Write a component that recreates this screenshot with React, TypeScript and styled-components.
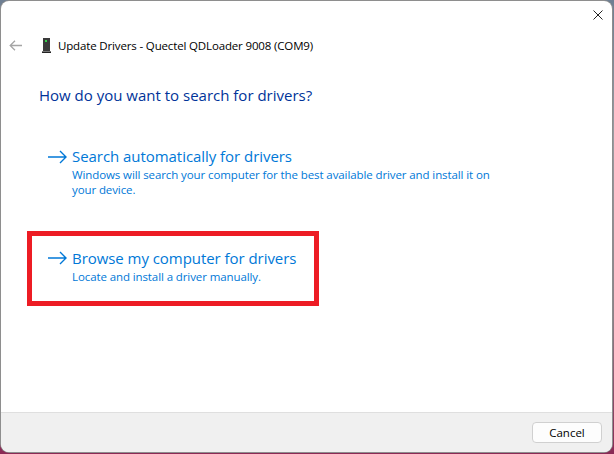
import styled, { createGlobalStyle } from 'styled-components';

const Global = createGlobalStyle`
  html, body { margin: 0; padding: 0; }
  body { width: 614px; height: 454px; overflow: hidden; background: #8d8f94; }
  #root { width: 614px; height: 454px; }
`;

const Desktop = styled.div`
  width: 614px;
  height: 454px;
  box-sizing: border-box;
  padding: 1px 2px 2px 1px;
  background: linear-gradient(#6f7f93, #9a9ba0 30%, #8c7f86 70%, #8a2a55);
  font-family: 'Open Sans', 'Noto Sans', 'Liberation Sans', sans-serif;
`;

const Window = styled.div`
  width: 100%;
  height: 100%;
  box-sizing: border-box;
  display: flex;
  flex-direction: column;
  background: #fff;
  border-radius: 8px;
  overflow: hidden;
  box-shadow: 0 0 0 1px #8e8e8e;
`;

const TitleArea = styled.div`
  height: 28px;
  box-sizing: border-box;
  display: flex;
  justify-content: flex-end;
  align-items: flex-start;
  padding: 9px 9px 0 0;
  flex-shrink: 0;
`;

const Header = styled.div`
  display: flex;
  align-items: center;
  height: 22px;
  margin-top: 5px;
  padding-left: 8px;
`;

const DeviceIcon = styled.svg`
  margin-left: 20px;
`;

const HeaderTitle = styled.span`
  font-size: 11.5px;
  letter-spacing: -0.15px;
  color: #000;
  margin-left: 7px;
`;

const Heading = styled.h1`
  margin: 28px 0 0 38px;
  font-size: 15px;
  line-height: 22px;
  font-weight: 400;
  color: #003399;
`;

const Content = styled.div`
  flex: 1;
  display: flex;
  flex-direction: column;
  padding: 40px 0 0 26px;
`;

const Option = styled.div<{ $boxed?: boolean }>`
  width: 292px;
  box-sizing: border-box;
  display: flex;
  align-items: flex-start;
  gap: 5px;
  padding: ${p => (p.$boxed ? '11px 0 0 16px' : '0 0 0 21px')};
  border: ${p => (p.$boxed ? '5px solid #ed1c24' : '0')};
  height: ${p => (p.$boxed ? '75px' : '85px')};
  color: #0078d7;
`;

const OptionText = styled.div`
  display: flex;
  flex-direction: column;
  white-space: nowrap;
`;

const OptionTitle = styled.div<{ $tall?: boolean }>`
  font-size: 15px;
  line-height: ${p => (p.$tall ? '22px' : '21px')};
  letter-spacing: -0.05px;
`;

const OptionNote = styled.div`
  font-size: 11.5px;
  line-height: 15px;
  letter-spacing: -0.1px;
`;

const ArrowIcon = styled.svg`
  flex-shrink: 0;
  margin-top: 3px;
`;

const Footer = styled.div`
  height: 40px;
  flex-shrink: 0;
  box-sizing: border-box;
  background: #f0f0f0;
  border-top: 1px solid #dfdfdf;
  display: flex;
  justify-content: flex-end;
  align-items: center;
  padding-right: 10px;
`;

const CancelButton = styled.button`
  width: 70px;
  height: 21px;
  padding: 0;
  border: 1px solid #d0d0d0;
  border-radius: 4px;
  background: #fdfdfd;
  font-family: inherit;
  font-size: 11.5px;
  color: #000;
`;

const Arrow = () => (
  <ArrowIcon width="19" height="16" viewBox="0 0 19 16" fill="none" stroke="#0078d7" strokeWidth="1.4">
    <path d="M0 8H18M12 2l6 6-6 6" />
  </ArrowIcon>
);

const App = () => (
  <>
    <Global />
    <Desktop>
      <Window>
        <TitleArea>
          <svg width="10" height="10" viewBox="0 0 10 10" fill="none" stroke="#222" strokeWidth="1">
            <path d="M.5.5l9 9M9.5.5l-9 9" />
          </svg>
        </TitleArea>
        <Header>
          <svg width="13" height="11" viewBox="0 0 13 11" fill="none" stroke="#a5a5a5" strokeWidth="1.3">
            <path d="M13 5.5H1.5M6 .8L1.2 5.5 6 10.2" />
          </svg>
          <DeviceIcon width="9" height="15" viewBox="0 0 9 15">
            <rect x="1" y="0" width="7" height="13" fill="#3a3a3a" />
            <rect x="3" y="2" width="2" height="2" fill="#35d04a" />
            <rect x="0" y="13" width="9" height="1" fill="#777" />
            <rect x="0" y="14" width="9" height="1" fill="#222" />
          </DeviceIcon>
          <HeaderTitle>Update Drivers - Quectel QDLoader 9008 (COM9)</HeaderTitle>
        </Header>
        <Heading>How do you want to search for drivers?</Heading>
        <Content>
          <Option>
            <Arrow />
            <OptionText>
              <OptionTitle>Search automatically for drivers</OptionTitle>
              <OptionNote>Windows will search your computer for the best available driver and install it on</OptionNote>
              <OptionNote>your device.</OptionNote>
            </OptionText>
          </Option>
          <Option $boxed>
            <Arrow />
            <OptionText>
              <OptionTitle $tall>Browse my computer for drivers</OptionTitle>
              <OptionNote>Locate and install a driver manually.</OptionNote>
            </OptionText>
          </Option>
        </Content>
        <Footer>
          <CancelButton>Cancel</CancelButton>
        </Footer>
      </Window>
    </Desktop>
  </>
);

export default App;
